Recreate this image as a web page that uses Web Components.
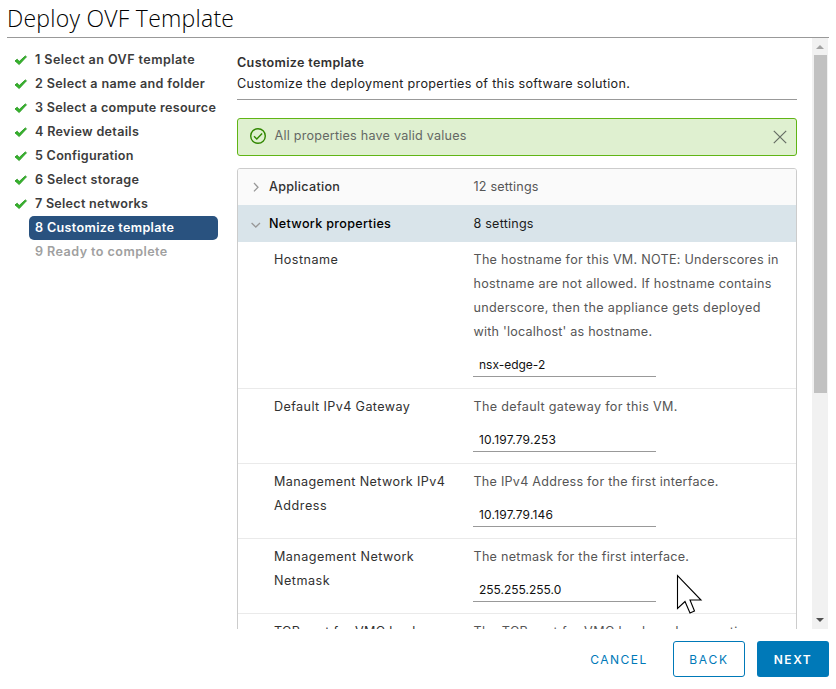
<!DOCTYPE html>
<html lang="en">
<head>
<meta charset="utf-8">
<title>Deploy OVF Template</title>
<style>
html,body{margin:0;height:100%;overflow:hidden;background:#fff}
body{font-family:Inter,"Open Sans","Liberation Sans",sans-serif;font-size:12.6px;color:#313131}
</style>
</head>
<body>
<ovf-wizard></ovf-wizard>
<script>
function define(name, html, setup) {
  const t = document.createElement('template');
  t.innerHTML = html;
  customElements.define(name, class extends HTMLElement {
    connectedCallback() {
      if (this.shadowRoot) return;
      this.attachShadow({mode: 'open'}).append(t.content.cloneNode(true));
      if (setup) setup.call(this, this.shadowRoot);
    }
  });
}

/* Text line tracked to a given width */
define('track-text', `<style>:host{display:block;white-space:nowrap;width:max-content}span{display:inline-block}</style><span><slot></slot></span>`, function (root) {
  const s = root.querySelector('span'), n = this.textContent.length;
  const natural = s.getBoundingClientRect().width;
  if (natural) this.style.letterSpacing = ((+this.getAttribute('w') - .8 - natural) / n).toFixed(3) + 'px';
});

define('wizard-step', `<style>
:host{display:grid;grid-template-columns:22px 189px;height:24px;align-items:center;font-weight:600;color:#3c3c3c}
svg{display:block;margin:0 0 0 7px}
.l{height:24px;line-height:24px;padding-left:6px;border-radius:5px}
:host([state=current]) .l{background:#29527f;color:#fff}
:host([state=todo]) .l{color:#a0a0a0}
:host([state]) svg{visibility:hidden}
</style>
<svg width="14" height="11" viewBox="0 0 14 11"><path d="M1 5.9 3.2 4.2 5.2 6.5 11.3.9l1.2.9L5.2 9.6z" fill="#35b52c" stroke="#219018" stroke-width=".8" stroke-linejoin="round"/></svg>
<div class="l"><slot></slot></div>`);

define('valid-alert', `<style>
:host{display:flex;box-sizing:border-box;height:38px;border:1px solid #60b515;border-radius:3px;background:#dff0d0;align-items:center;color:#646864;padding:0 9px 3px 11px;margin-bottom:12px}
.g{flex:1}svg{display:block}.x{margin-top:2px}
.c{margin:1px 7.5px 0 0}
</style>
<svg class="c" width="18" height="18" viewBox="0 0 18 18" fill="none" stroke="#318700" stroke-width="1.4"><circle cx="9" cy="9" r="7.3"/><path d="m5 9.2 2.8 2.8 5.3-5.4"/></svg>
<slot></slot><div class="g"></div>
<svg class="x" width="14" height="14" viewBox="0 0 14 14" fill="none" stroke="#666d64" stroke-width="1.2"><path d="m.8.8 12.4 12.4M13.2.8.8 13.2"/></svg>`);

define('group-row', `<style>
:host{display:grid;grid-template-columns:31px 204.5px 1fr;height:36px;align-items:center;background:#fafafa;border-bottom:1px solid #d9e4ea;font-weight:500;color:#313131}
:host(:not([open])){box-sizing:border-box;height:37px;padding-bottom:2px}
:host([open]){background:#d9e4ea;height:35px;color:#000}
svg{display:block;margin:2px 0 0 12px}
:host([open]) svg{transform:rotate(90deg)}
.c{font-weight:400;color:#565656}
:host([open]) .c{color:#1c1c1c}
</style>
<svg width="12" height="12" viewBox="0 0 12 12" fill="none" stroke="#989898" stroke-width="1.3"><path d="m4 2 4 4.2-4 4.2"/></svg>
<slot></slot><div class="c"><slot name="count"></slot></div>`);

define('property-row', `<style>
:host{display:grid;grid-template-columns:199.5px 1fr;padding:6px 0 11px 36px;border-bottom:1px solid #eaeaea;line-height:24px}
.d{color:#565656}
.f{box-sizing:border-box;width:183px;height:24px;border-bottom:1px solid #999;margin:9px 0 0 -.5px;padding-left:6px;line-height:24px;font-size:12px;color:#111}
</style>
<div><slot name="label"></slot></div>
<div class="d"><slot></slot><div class="f"><slot name="value"></slot></div></div>`);

define('scroll-rail', `<style>
:host{display:flex;flex-direction:column;width:16px;background:#f1f1f1;align-items:center}
.t{width:13px;height:338px;background:#c1c1c1;margin-top:6px}
.s{flex:1}
svg{display:block}
</style>
<svg width="8" height="4" style="margin-top:7px"><path d="M0 4 4 0l4 4z" fill="#a3a3a3"/></svg><div class="t"></div><div class="s"></div>
<svg width="8" height="4" style="margin-bottom:7px"><path d="M0 0h8L4 4z" fill="#505050"/></svg>`);

define('action-button', `<style>
:host{display:flex;box-sizing:border-box;width:72px;height:36px;align-items:center;justify-content:center;border:1px solid transparent;border-radius:3px;color:#0079b8;font-size:12px;font-weight:400}
:host([kind=outline]){border-color:#0079b8}
:host([kind=primary]){background:#0079b8;color:#fff;font-weight:600}
:host([kind=link]){width:84px}
</style><slot></slot>`);

define('mouse-pointer', `<style>:host{position:absolute;left:676px;top:574px;width:28px;height:42px}svg{display:block}</style>
<svg width="28" height="42" viewBox="0 0 28 42"><path d="M1.5 1.5v33l7.5-7 5 11.5 4.5-2-4.5-11h11z" fill="#fff" stroke="#000" stroke-width="1.1"/></svg>`);

define('ovf-wizard', `<style>
:host{display:flex;flex-direction:column;width:836px;height:689px;overflow:hidden}
header{box-sizing:border-box;height:38px;margin:0 7px;border-bottom:1px solid #999;font-family:"Open Sans",Inter,sans-serif;font-size:23px;font-weight:300;line-height:36px;color:#000}
main{display:grid;grid-template-columns:237px 560px 15px 16px;height:591px}
nav{padding:10px 0 0 7px}
section{height:591px;overflow:hidden}
.h{height:61px;border-bottom:1px solid #999;margin-bottom:18px;box-sizing:content-box}
.h track-text{height:21px;line-height:21px}
.h track-text:first-child{font-weight:600;padding-top:14px}
.h track-text+track-text{color:#222}
.table{border:1px solid #ccc;border-radius:3px;overflow:hidden}
footer{display:flex;gap:12px;padding:12px 7px 0 0;justify-content:flex-end}
</style>
<header><track-text w="228">Deploy OVF Template</track-text></header>
<main>
<nav>
<wizard-step><track-text w="161">1 Select an OVF template</track-text></wizard-step>
<wizard-step><track-text w="171">2 Select a name and folder</track-text></wizard-step>
<wizard-step><track-text w="182">3 Select a compute resource</track-text></wizard-step>
<wizard-step><track-text w="105">4 Review details</track-text></wizard-step>
<wizard-step><track-text w="99.5">5 Configuration</track-text></wizard-step>
<wizard-step><track-text w="105">6 Select storage</track-text></wizard-step>
<wizard-step><track-text w="114">7 Select networks</track-text></wizard-step>
<wizard-step state="current"><track-text w="140">8 Customize template</track-text></wizard-step>
<wizard-step state="todo"><track-text w="133.5">9 Ready to complete</track-text></wizard-step>
</nav>
<section>
<div class="h"><track-text w="128">Customize template</track-text><track-text w="394">Customize the deployment properties of this software solution.</track-text></div>
<valid-alert><track-text w="193">All properties have valid values</track-text></valid-alert>
<div class="table">
<group-row><track-text w="72">Application</track-text><track-text slot="count" w="66">12 settings</track-text></group-row>
<group-row open><track-text w="123">Network properties</track-text><track-text slot="count" w="61">8 settings</track-text></group-row>
<property-row><track-text slot="label" w="65">Hostname</track-text>
<track-text w="306">The hostname for this VM. NOTE: Underscores in</track-text><track-text w="299">hostname are not allowed. If hostname contains</track-text><track-text w="288">underscore, then the appliance gets deployed</track-text><track-text w="179.5">with 'localhost' as hostname.</track-text>
<track-text slot="value" w="67">nsx-edge-2</track-text></property-row>
<property-row><track-text slot="label" w="137">Default IPv4 Gateway</track-text><track-text w="205">The default gateway for this VM.</track-text><track-text slot="value" w="78">10.197.79.253</track-text></property-row>
<property-row><track-text slot="label" w="172">Management Network IPv4</track-text><track-text slot="label" w="54">Address</track-text><track-text w="246">The IPv4 Address for the first interface.</track-text><track-text slot="value" w="75">10.197.79.146</track-text></property-row>
<property-row><track-text slot="label" w="141">Management Network</track-text><track-text slot="label" w="57">Netmask</track-text><track-text w="216.5">The netmask for the first interface.</track-text><track-text slot="value" w="83">255.255.255.0</track-text></property-row>
<property-row><track-text slot="label" w="152">TCP port for VMC back-</track-text><track-text w="285">The TCP port for VMC back-end connection.</track-text></property-row>
</div>
</section>
<div></div>
<scroll-rail></scroll-rail>
</main>
<footer>
<action-button kind="link"><track-text w="58.5">CANCEL</track-text></action-button>
<action-button kind="outline"><track-text w="40.5">BACK</track-text></action-button>
<action-button kind="primary"><track-text w="39.5">NEXT</track-text></action-button>
</footer>
<mouse-pointer></mouse-pointer>`);
</script>
</body>
</html>
